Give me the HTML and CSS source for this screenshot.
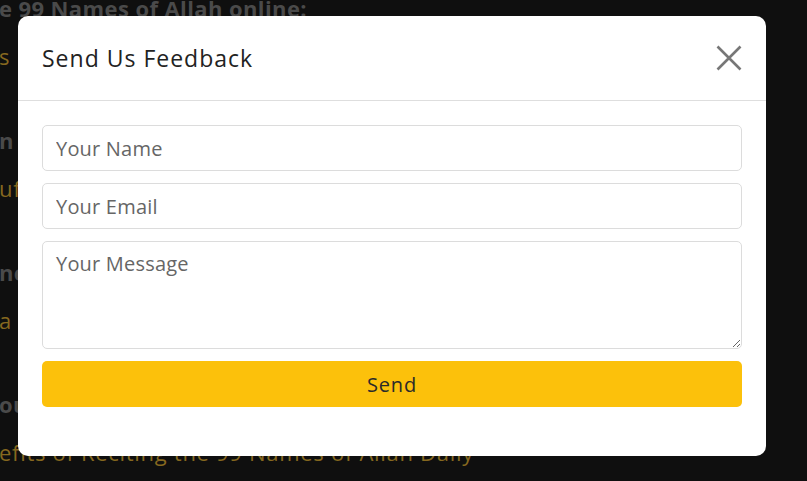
FILE: index.html
```html
<!DOCTYPE html>
<html lang="en">
<head>
<meta charset="utf-8">
<title>Send Us Feedback</title>
<link rel="stylesheet" href="styles.css">
</head>
<body>
<main class="page">
  <section class="block">
    <h2 class="block-title">e 99 Names of Allah online:</h2>
    <a class="block-link" href="#">s</a>
  </section>
  <section class="block">
    <h2 class="block-title">n</h2>
    <a class="block-link" href="#">uf</a>
  </section>
  <section class="block">
    <h2 class="block-title">ne</h2>
    <a class="block-link" href="#">a -</a>
  </section>
  <section class="block">
    <h2 class="block-title">ou</h2>
    <a class="block-link" href="#">efits of Reciting the 99 Names of Allah Daily</a>
  </section>
</main>

<div class="overlay">
  <div class="modal" role="dialog" aria-labelledby="fb-title">
    <header class="modal-header">
      <h1 class="modal-title" id="fb-title">Send Us Feedback</h1>
      <button class="close" type="button" aria-label="Close">
        <svg width="26" height="26" viewBox="0 0 26 26"><path d="M1.5 1.5 L24.5 24.5 M24.5 1.5 L1.5 24.5" stroke="#777" stroke-width="2.6" stroke-linecap="butt" fill="none"/></svg>
      </button>
    </header>
    <form class="modal-body">
      <input class="field" type="text" placeholder="Your Name">
      <input class="field" type="email" placeholder="Your Email">
      <textarea class="field field-area" placeholder="Your Message"></textarea>
      <button class="send" type="button">Send</button>
    </form>
  </div>
</div>
</body>
</html>
```

FILE: styles.css
```css
* { box-sizing: border-box; }
html, body { height: 100%; }
body {
  margin: 0;
  background: #0f0f0f;
  font-family: "Open Sans", "Lato", sans-serif;
  overflow: hidden;
}
.page {
  height: 100%;
  overflow: hidden;
  margin-left: -1px;
}
.block {
  display: flex;
  flex-direction: column;
  margin-bottom: 36px;
}
.block:first-child { margin-top: -16px; }
.block-title {
  margin: 0;
  font-size: 22px;
  font-weight: 700;
  line-height: 48px;
  color: #4a4a4a;
  letter-spacing: 0.4px;
  white-space: nowrap;
}
.block-link {
  font-size: 22px;
  font-weight: 400;
  line-height: 48px;
  color: #86681f;
  letter-spacing: 0.7px;
  text-decoration: none;
  white-space: nowrap;
}
.overlay {
  position: fixed;
  inset: 0;
  padding: 16px 0 0 18px;
}
.modal {
  width: 748px;
  height: 440px;
  background: #fff;
  border-radius: 10px;
  display: flex;
  flex-direction: column;
}
.modal-header {
  height: 85px;
  padding: 0 24px;
  display: flex;
  align-items: center;
  justify-content: space-between;
  border-bottom: 1px solid #dedede;
}
.modal-title {
  margin: 0;
  font-size: 23px;
  font-weight: 400;
  letter-spacing: 1px;
  color: #222;
}
.close {
  border: 0;
  background: none;
  padding: 0;
  width: 26px;
  height: 26px;
  display: flex;
  cursor: pointer;
}
.modal-body {
  padding: 24px 24px 49px;
  display: flex;
  flex-direction: column;
  gap: 12px;
}
.field {
  height: 46px;
  border: 1px solid #dcdcdc;
  border-radius: 5px;
  padding: 0 13px;
  font-family: inherit;
  font-size: 20px;
  letter-spacing: 0.2px;
  color: #333;
  background: #fff;
}
.field::placeholder { color: #666; }
.field-area {
  height: 108px;
  padding-top: 8px;
  resize: vertical;
}
.send {
  height: 46px;
  border: 0;
  border-radius: 5px;
  background: #fcc10b;
  font-family: inherit;
  font-size: 20px;
  letter-spacing: 0.8px;
  color: #2a2a2a;
}
```
